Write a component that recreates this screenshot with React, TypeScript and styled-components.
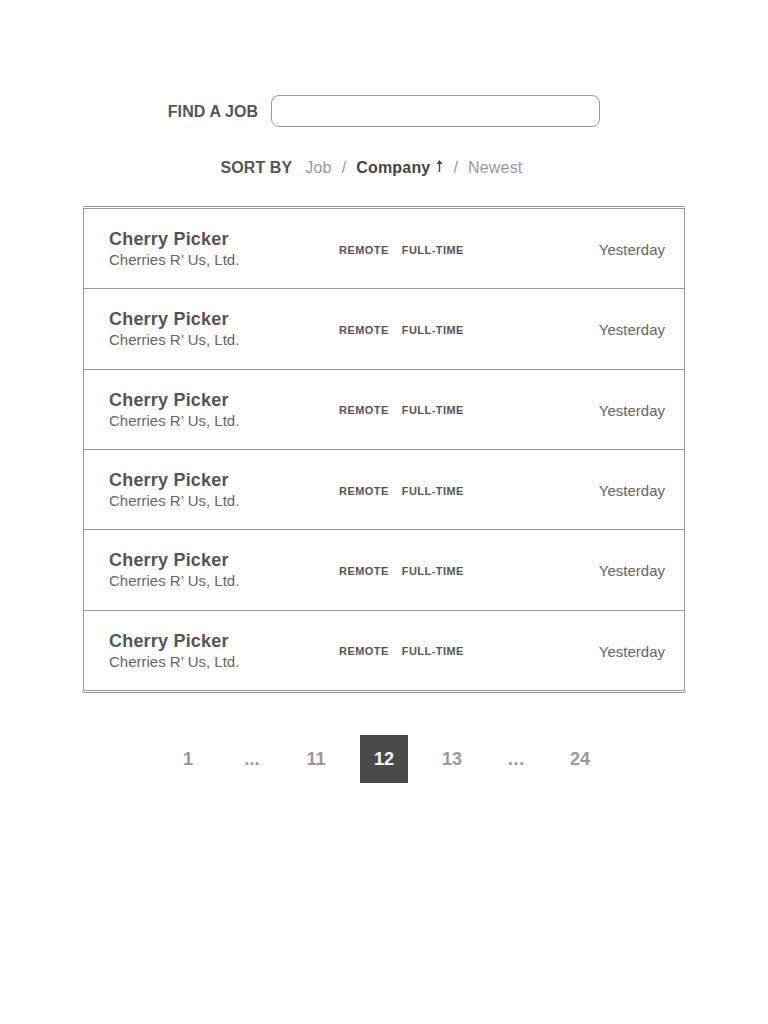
import React from "react";
import styled, { createGlobalStyle } from "styled-components";

const GlobalStyle = createGlobalStyle`
  html, body { margin: 0; padding: 0; background: #fff; }
  body { font-family: "Liberation Sans", Arial, sans-serif; color: #555; }
  * { box-sizing: border-box; }
`;

const Page = styled.main`
  display: flex;
  flex-direction: column;
  align-items: center;
  padding-top: 95px;
`;

const SearchRow = styled.div`
  display: flex;
  align-items: center;
  gap: 13px;
`;

const Label = styled.label`
  font-size: 16px;
  font-weight: 700;
  color: #555;
  line-height: 20px;
  padding-top: 2px;
  letter-spacing: 0.1px;
`;

const SearchInput = styled.input`
  width: 329px;
  height: 32px;
  border: 1px solid #999;
  border-radius: 8px;
  background: #fff;
  outline: none;
  padding: 0 10px;
  font: inherit;
`;

const SortRow = styled.nav`
  margin-top: 31px;
  display: flex;
  align-items: center;
  font-size: 16px;
  line-height: 20px;
  padding-right: 25px;
`;

const SortLabel = styled.span`
  font-weight: 700;
  color: #555;
  margin-right: 13px;
  letter-spacing: 0.1px;
`;

const SortOption = styled.span<{ $active?: boolean }>`
  color: ${(p) => (p.$active ? "#444" : "#999")};
  font-weight: ${(p) => (p.$active ? 700 : 400)};
  display: inline-flex;
  align-items: center;
  letter-spacing: 0.2px;
`;

const Sep = styled.span`
  color: #999;
  margin: 0 10px;
`;

const Arrow = styled.svg`
  margin-left: 6px;
  margin-top: -4px;
`;

const List = styled.ul`
  list-style: none;
  margin: 28px 0 0;
  width: 602px;
  padding: 1px 0;
  border-top: 1px solid #999;
  border-bottom: 1px solid #999;
`;

const Row = styled.li`
  height: 80.33px;
  border: 1px solid #999;
  border-bottom: none;
  display: flex;
  align-items: center;
  padding: 2px 19px 0 25px;
  &:last-child {
    height: 81.33px;
    border-bottom: 1px solid #999;
  }
`;

const Info = styled.div`
  width: 230px;
  display: flex;
  flex-direction: column;
`;

const Title = styled.span`
  font-size: 18px;
  font-weight: 700;
  line-height: 21px;
  letter-spacing: 0.2px;
  color: #555;
`;

const Company = styled.span`
  font-size: 15px;
  line-height: 20px;
  color: #666;
`;

const Tags = styled.div`
  flex: 1;
  display: flex;
  gap: 13px;
`;

const Tag = styled.span`
  font-size: 11px;
  font-weight: 700;
  letter-spacing: 0.45px;
  color: #555;
`;

const DateText = styled.span`
  font-size: 15px;
  color: #666;
`;

const Pagination = styled.nav`
  margin-top: 42px;
  display: flex;
  align-items: center;
  gap: 24px;
`;

const PageItem = styled.span<{ $active?: boolean }>`
  width: ${(p) => (p.$active ? "48px" : "40px")};
  height: 48px;
  padding-top: 2px;
  display: flex;
  align-items: center;
  justify-content: center;
  font-size: 18px;
  font-weight: 700;
  color: ${(p) => (p.$active ? "#fff" : "#999")};
  background: ${(p) => (p.$active ? "#4a4a4a" : "transparent")};
`;

const jobs = Array.from({ length: 6 }, () => ({
  title: "Cherry Picker",
  company: "Cherries R’ Us, Ltd.",
  tags: ["REMOTE", "FULL-TIME"],
  date: "Yesterday",
}));

const pages = ["1", "...", "11", "12", "13", "…", "24"];

export default function App() {
  return (
    <>
      <GlobalStyle />
      <Page>
        <SearchRow>
          <Label htmlFor="q">FIND A JOB</Label>
          <SearchInput id="q" type="text" />
        </SearchRow>
        <SortRow>
          <SortLabel>SORT BY</SortLabel>
          <SortOption>Job</SortOption>
          <Sep>/</Sep>
          <SortOption $active>
            Company
            <Arrow width="7" height="12" viewBox="0 0 7 12">
              <path d="M3.5 0 L6.5 4 L0.5 4 Z" fill="#444" />
              <rect x="2.8" y="3" width="1.4" height="9" fill="#444" />
            </Arrow>
          </SortOption>
          <Sep>/</Sep>
          <SortOption>Newest</SortOption>
        </SortRow>
        <List>
          {jobs.map((j, i) => (
            <Row key={i}>
              <Info>
                <Title>{j.title}</Title>
                <Company>{j.company}</Company>
              </Info>
              <Tags>
                {j.tags.map((t) => (
                  <Tag key={t}>{t}</Tag>
                ))}
              </Tags>
              <DateText>{j.date}</DateText>
            </Row>
          ))}
        </List>
        <Pagination>
          {pages.map((p, i) => (
            <PageItem key={i} $active={p === "12"}>
              {p}
            </PageItem>
          ))}
        </Pagination>
      </Page>
    </>
  );
}
